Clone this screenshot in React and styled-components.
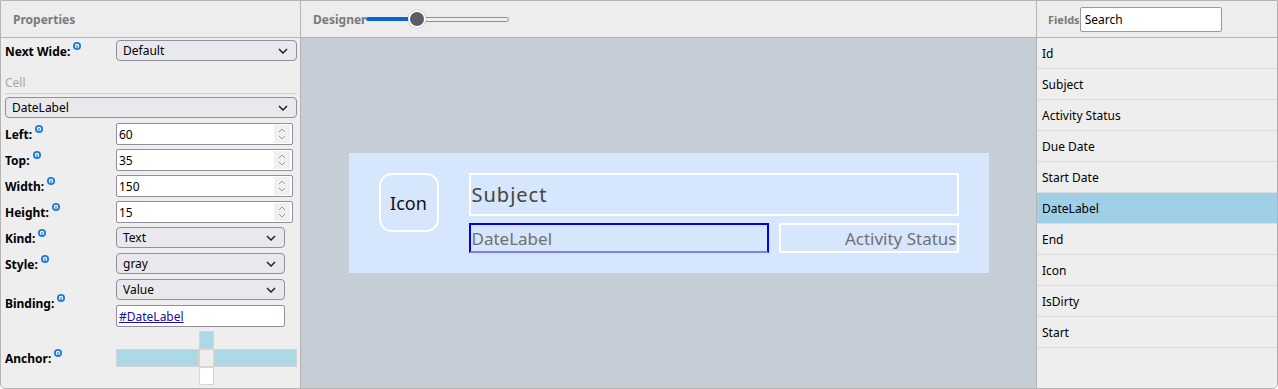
import styled, { createGlobalStyle } from "styled-components";

const GlobalStyle = createGlobalStyle`
  body {
    margin: 0;
    background: #ffffff;
    font-family: "Noto Sans", "Open Sans", sans-serif;
    color: #000;
  }
`;

const Frame = styled.div`
  width: 1278px;
  height: 389px;
  box-sizing: border-box;
  border: 1px solid #b4b4b4;
  border-radius: 0 0 5px 5px;
  display: grid;
  grid-template-columns: 300px 736px 1fr;
  overflow: hidden;
  background: #eeeeee;
`;

const Column = styled.section`
  display: flex;
  flex-direction: column;
  min-width: 0;
  border-right: ${(p) => (p.$last ? "none" : "1px solid #b4b4b4")};
`;

const Header = styled.header`
  height: 36px;
  flex-shrink: 0;
  display: flex;
  align-items: center;
  padding-left: ${(p) => p.$pad}px;
  gap: ${(p) => p.$gap || 0}px;
  border-bottom: 1px solid #b4b4b4;
  background: #ededed;
`;

const HeaderTitle = styled.span`
  font-size: ${(p) => p.$size || 12}px;
  font-weight: 700;
  color: #7a7a7a;
`;

/* ---------- properties ---------- */

const PropsBody = styled.div`
  display: flex;
  flex-direction: column;
  padding-left: 4px;
`;

const PropRow = styled.div`
  display: flex;
  align-items: center;
  margin-top: ${(p) => p.$mt}px;
  height: ${(p) => p.$h}px;
`;

const Label = styled.div`
  width: 111px;
  flex-shrink: 0;
  display: flex;
  align-items: flex-start;
  font-size: 12px;
  font-weight: 700;
  line-height: 14px;
  padding-top: 2px;
`;

const Info = styled.svg`
  width: 8px;
  height: 8px;
  margin: -3px 0 0 3px;
`;

const SectionTitle = styled.div`
  width: 292px;
  margin-top: 14px;
  height: 18px;
  line-height: 16px;
  font-size: 12px;
  color: #a8a8a8;
  border-bottom: 1px solid #d0d0d0;
`;

const SelectBox = styled.div`
  width: ${(p) => p.$w}px;
  height: ${(p) => p.$h || 21}px;
  box-sizing: border-box;
  margin-top: ${(p) => p.$mt || 0}px;
  display: flex;
  align-items: center;
  justify-content: space-between;
  padding: 0 8px 0 6px;
  border: 1px solid #8f8f9d;
  border-radius: 4px;
  background: #e9e9ed;
  font-size: 12px;
`;

const TextBox = styled.div`
  width: ${(p) => p.$w}px;
  height: 22px;
  box-sizing: border-box;
  margin-top: ${(p) => p.$mt || 0}px;
  display: flex;
  align-items: center;
  padding-left: 2px;
  border: 1px solid #8f8f9d;
  border-radius: 2px;
  background: #ffffff;
  font-size: 12px;
`;

const TextValue = styled.span`
  flex: 1;
`;

const LinkText = styled.a`
  color: #1a0dab;
  text-decoration: underline;
  font-size: 12px;
`;

const Spinner = styled.div`
  width: 16px;
  height: 18px;
  margin-right: 2px;
  display: flex;
  align-items: center;
  justify-content: center;
  background: #f0f0f0;
`;

const Stack = styled.div`
  display: flex;
  flex-direction: column;
`;

const AnchorGrid = styled.div`
  display: grid;
  grid-template-columns: 83px 15px 83px;
  grid-template-rows: 18px 18px 18px;
`;

const AnchorCell = styled.div`
  box-sizing: border-box;
  background: ${(p) => p.$bg || "transparent"};
  border: ${(p) => (p.$bg ? "1px solid #d4d4d4" : "none")};
`;

/* ---------- designer ---------- */

const SliderWrap = styled.div`
  position: relative;
  width: 143px;
  height: 20px;
  display: flex;
  align-items: center;
`;

const SliderFill = styled.div`
  width: 50px;
  height: 4px;
  border-radius: 2px;
  background: #0b62d6;
`;

const SliderRest = styled.div`
  flex: 1;
  height: 5px;
  box-sizing: border-box;
  border: 1px solid #8f8f9d;
  border-radius: 3px;
  background: #efefef;
`;

const SliderThumb = styled.div`
  position: absolute;
  left: 42px;
  top: 1px;
  width: 18px;
  height: 18px;
  box-sizing: border-box;
  border-radius: 50%;
  border: 2px solid #ffffff;
  background: #5c5c68;
  box-shadow: 0 0 1px rgba(0, 0, 0, 0.5);
`;

const Canvas = styled.div`
  flex: 1;
  display: flex;
  align-items: center;
  justify-content: center;
  background: #c5cdd6;
`;

const Card = styled.div`
  position: relative;
  width: 640px;
  height: 120px;
  background: #d6e6fc;
`;

const CardItem = styled.div`
  position: absolute;
  left: ${(p) => p.$x}px;
  top: ${(p) => p.$y}px;
  width: ${(p) => p.$w}px;
  height: ${(p) => p.$h}px;
  box-sizing: border-box;
  display: flex;
  align-items: center;
  border: 2px solid #ffffff;
  font-size: 17px;
  color: #707070;
  padding: 0 1px;
  white-space: nowrap;
`;

const IconItem = styled(CardItem)`
  justify-content: center;
  border-radius: 13px;
  font-size: 18px;
  color: #111;
`;

const SubjectItem = styled(CardItem)`
  font-size: 20px;
  letter-spacing: 1px;
  color: #444;
`;

const SelectedItem = styled(CardItem)`
  border-color: #0000ee;
  border-bottom-color: #7f7ff5;
`;

const RightItem = styled(CardItem)`
  justify-content: flex-end;
  padding-right: 0;
`;

/* ---------- fields ---------- */

const SearchBox = styled.div`
  width: 142px;
  height: 25px;
  box-sizing: border-box;
  display: flex;
  align-items: center;
  padding-left: 4px;
  border: 1px solid #9a9a9a;
  border-radius: 2px;
  background: #ffffff;
  font-size: 12px;
`;

const FieldList = styled.ul`
  list-style: none;
  margin: 0;
  padding: 0;
`;

const FieldRow = styled.li`
  height: 30px;
  display: flex;
  align-items: center;
  padding-left: 5px;
  padding-top: 1px;
  box-sizing: border-box;
  height: 31px;
  border-bottom: 1px solid #dcdcdc;
  background: ${(p) => (p.$selected ? "#9fd0e8" : "transparent")};
  font-size: 12px;
`;

function InfoIcon() {
  return (
    <Info viewBox="0 0 8 8">
      <circle cx="4" cy="4" r="4" fill="#1e78d8" />
      <circle cx="4" cy="4" r="2.2" fill="#ffffff" />
      <rect x="3.4" y="3" width="1.2" height="3" fill="#1e78d8" />
    </Info>
  );
}

function Chevron() {
  return (
    <svg width="10" height="6" viewBox="0 0 10 6">
      <path d="M1 1l4 4 4-4" fill="none" stroke="#222" strokeWidth="1.5" />
    </svg>
  );
}

function SpinArrows() {
  return (
    <Spinner>
      <svg width="8" height="14" viewBox="0 0 8 14">
        <path d="M1 5l3-3 3 3M1 9l3 3 3-3" fill="none" stroke="#9a9a9a" strokeWidth="1" />
      </svg>
    </Spinner>
  );
}

function Select({ value, w, mt }) {
  return (
    <SelectBox $w={w} $mt={mt}>
      <span>{value}</span>
      <Chevron />
    </SelectBox>
  );
}

function PropLabel({ children }) {
  return (
    <Label>
      {children}
      <InfoIcon />
    </Label>
  );
}

function NumberField({ label, value, mt }) {
  return (
    <PropRow $mt={mt} $h={22}>
      <PropLabel>{label}</PropLabel>
      <TextBox $w={177}>
        <TextValue>{value}</TextValue>
        <SpinArrows />
      </TextBox>
    </PropRow>
  );
}

const fields = [
  "Id",
  "Subject",
  "Activity Status",
  "Due Date",
  "Start Date",
  "DateLabel",
  "End",
  "Icon",
  "IsDirty",
  "Start",
];

export default function App() {
  return (
    <>
      <GlobalStyle />
      <Frame>
        <Column>
          <Header $pad={12}>
            <HeaderTitle>Properties</HeaderTitle>
          </Header>
          <PropsBody>
            <PropRow $mt={2} $h={21}>
              <PropLabel>Next Wide:</PropLabel>
              <Select value="Default" w={181} />
            </PropRow>
            <SectionTitle>Cell</SectionTitle>
            <Select value="DateLabel" w={292} mt={3} />
            <NumberField label="Left:" value="60" mt={5} />
            <NumberField label="Top:" value="35" mt={4} />
            <NumberField label="Width:" value="150" mt={4} />
            <NumberField label="Height:" value="15" mt={4} />
            <PropRow $mt={4} $h={21}>
              <PropLabel>Kind:</PropLabel>
              <Select value="Text" w={169} />
            </PropRow>
            <PropRow $mt={5} $h={21}>
              <PropLabel>Style:</PropLabel>
              <Select value="gray" w={169} />
            </PropRow>
            <PropRow $mt={5} $h={48}>
              <PropLabel>Binding:</PropLabel>
              <Stack>
                <Select value="Value" w={169} />
                <TextBox $w={169} $mt={5}>
                  <LinkText>#DateLabel</LinkText>
                </TextBox>
              </Stack>
            </PropRow>
            <PropRow $mt={4} $h={54}>
              <PropLabel>Anchor:</PropLabel>
              <AnchorGrid>
                <AnchorCell />
                <AnchorCell $bg="#add8e6" />
                <AnchorCell />
                <AnchorCell $bg="#add8e6" />
                <AnchorCell $bg="#eeeeee" />
                <AnchorCell $bg="#add8e6" />
                <AnchorCell />
                <AnchorCell $bg="#ffffff" />
                <AnchorCell />
              </AnchorGrid>
            </PropRow>
          </PropsBody>
        </Column>

        <Column>
          <Header $pad={12}>
            <HeaderTitle>Designer</HeaderTitle>
            <SliderWrap>
              <SliderFill />
              <SliderRest />
              <SliderThumb />
            </SliderWrap>
          </Header>
          <Canvas>
            <Card>
              <IconItem $x={30} $y={20} $w={60} $h={59}>Icon</IconItem>
              <SubjectItem $x={120} $y={20} $w={490} $h={43}>Subject</SubjectItem>
              <SelectedItem $x={120} $y={70} $w={300} $h={30}>DateLabel</SelectedItem>
              <RightItem $x={430} $y={70} $w={180} $h={30}>Activity Status</RightItem>
            </Card>
          </Canvas>
        </Column>

        <Column $last>
          <Header $pad={11}>
            <HeaderTitle $size={11}>Fields</HeaderTitle>
            <SearchBox>Search</SearchBox>
          </Header>
          <FieldList>
            {fields.map((f) => (
              <FieldRow key={f} $selected={f === "DateLabel"}>
                {f}
              </FieldRow>
            ))}
          </FieldList>
        </Column>
      </Frame>
    </>
  );
}
